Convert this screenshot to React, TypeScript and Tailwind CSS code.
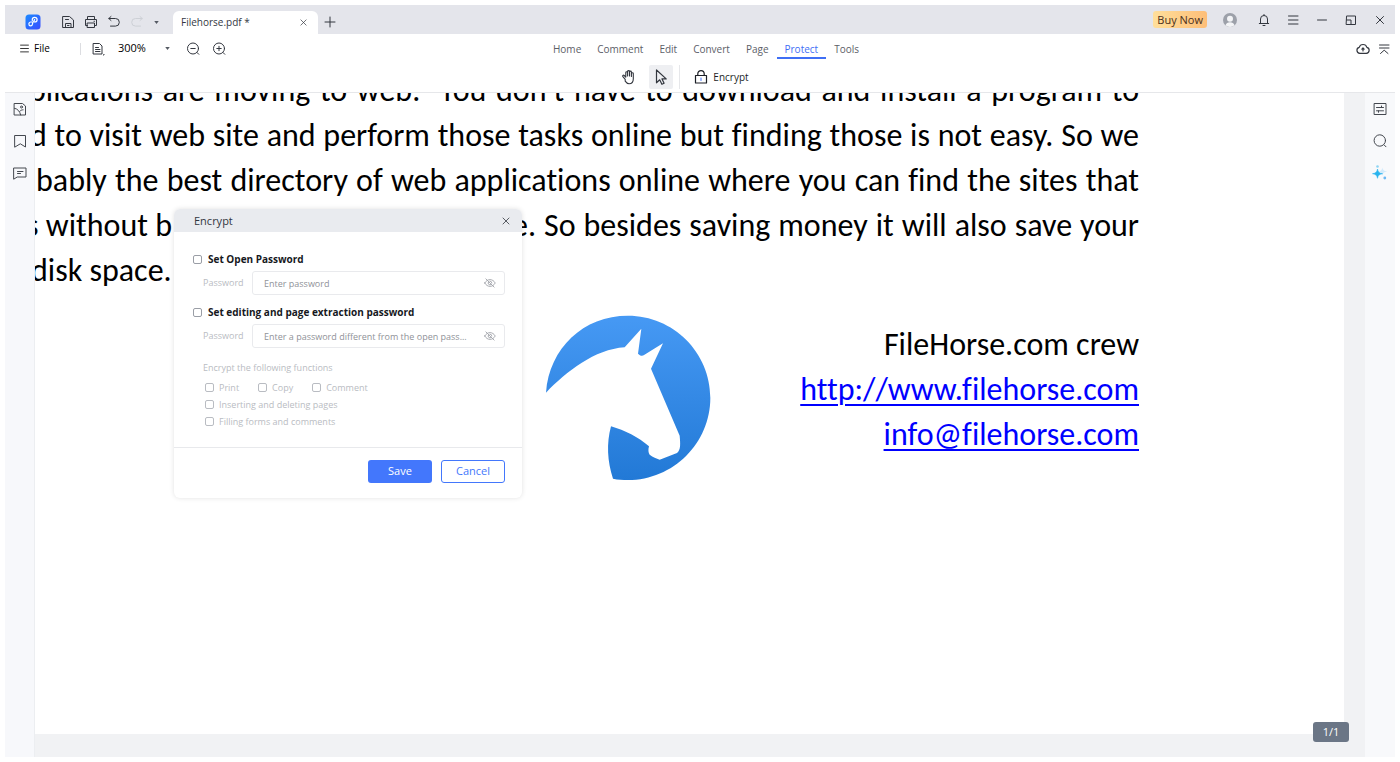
import React from "react";

const menuItems = ["Home", "Comment", "Edit", "Convert", "Page", "Protect", "Tools"];

const permissions = [
  ["Print", "Copy", "Comment"],
  ["Inserting and deleting pages"],
  ["Filling forms and comments"],
];

type IconProps = {
  size?: string;
  className?: string;
  children: React.ReactNode;
};

// All line icons share a 16 unit grid
const Icon: React.FC<IconProps> = ({ size = "w-4 h-4", className = "", children }) => (
  <svg
    viewBox="0 0 16 16"
    className={`${size} shrink-0 ${className}`}
    fill="none"
    stroke="currentColor"
    strokeWidth={1}
    strokeLinecap="round"
    strokeLinejoin="round"
    aria-hidden="true"
  >
    {children}
  </svg>
);

const Caret = () => (
  <svg viewBox="0 0 6 4" className="w-[5px] h-[3px] text-[#555a63]" aria-hidden="true">
    <path d="M0 0h6L3 4z" fill="currentColor" />
  </svg>
);

const CloseIcon = ({ size }: { size: string }) => (
  <Icon size={size}>
    <path d="M2 2l12 12M14 2L2 14" strokeWidth={1.6} />
  </Icon>
);

const AppLogo = () => (
  <svg viewBox="0 0 16 16" className="w-4 h-4 shrink-0" aria-hidden="true">
    <defs>
      <linearGradient id="appLogo" x1="0" y1="0" x2="1" y2="1">
        <stop offset="0" stopColor="#1b8bff" />
        <stop offset="1" stopColor="#3a4bff" />
      </linearGradient>
    </defs>
    <rect x="0.5" y="0.5" width="15" height="15" rx="3.5" fill="url(#appLogo)" />
    <path
      d="M7.300 6.500V5.600c0-1.400 1-2.200 2.300-2.200 1.500 0 2.500.9 2.500 2.300S11.100 8 9.600 8H5.900c-1.200 0-2 .8-2 2s.7 1.900 1.700 1.900 1.700-.7 1.800-1.700l.3-1.200M9.600 5.500L8.500 8"
      fill="none"
      stroke="#fff"
      strokeWidth="1.200"
      strokeLinecap="round"
    />
  </svg>
);

const TitleBar = () => (
  <header className="flex h-[29px] shrink-0 items-center bg-[#e4e5eb] pl-5 pr-[7px] text-[#33373f]">
    <div className="pt-[5px]">
      <AppLogo />
    </div>
    <div className="ml-[19px] flex items-center gap-[7px] pt-[5px]">
      <button aria-label="Save file">
        <Icon>
          <path d="M3 2.500h6.500L13.500 6v7.500H3zM5.500 13.500V9.500h5.500v4M5.500 5.500h3M7.500 11.500h1.500" />
        </Icon>
      </button>
      <button aria-label="Print">
        <Icon>
          <path d="M4.500 5.500v-3h7v3M4.500 11.500h-2v-6h11v6h-2M4.500 9h7v4.500h-7zM11 7.300h.5" />
        </Icon>
      </button>
      <button aria-label="Undo">
        <Icon>
          <path d="M5 2.500L2.800 4.500 5 6.500M2.800 4.500h6.700a3.800 3.800 0 0 1 0 7.600H4.500" />
        </Icon>
      </button>
      <button aria-label="Redo" className="text-[#cdd0d6]">
        <Icon>
          <path d="M11 2.500l2.200 2L11 6.500M13.200 4.500H6.500a3.800 3.800 0 0 0 0 7.600h5" />
        </Icon>
      </button>
      <button aria-label="More actions" className="ml-[2px]">
        <Caret />
      </button>
    </div>
    <div className="ml-[14px] flex w-[145px] items-center justify-between self-end rounded-t-md bg-white pl-2 pr-[11px] h-[23px]">
      <span className="text-[10px]">Filehorse.pdf *</span>
      <button aria-label="Close tab">
        <CloseIcon size="w-[7px] h-[7px]" />
      </button>
    </div>
    <button aria-label="New tab" className="ml-1 pt-1">
      <Icon>
        <path d="M8 3v10M3 8h10" />
      </Icon>
    </button>
    <div className="ml-auto flex items-center gap-[14px]">
      <button className="h-[17px] rounded-[3px] bg-linear-to-r from-[#ffdf9b] to-[#fdbe78] px-1 text-[11px] leading-[17px] text-[#4a2f1b]">
        Buy Now
      </button>
      <button aria-label="Account" className="ml-[2px] mr-[5px]">
        <svg viewBox="0 0 14 14" className="w-[14px] h-[14px]" aria-hidden="true">
          <circle cx="7" cy="7" r="7" fill="#9ca0a9" />
          <circle cx="7" cy="5.800" r="3" fill="#f3f4f6" />
          <path d="M2.500 12.300c.6-2 2.300-3 4.500-3s3.900 1 4.500 3A7 7 0 0 1 7 14a7 7 0 0 1-4.500-1.700z" fill="#f3f4f6" />
        </svg>
      </button>
      <div className="flex items-center gap-[13px]">
        <button aria-label="Notifications">
          <Icon>
            <path d="M4.500 11.500V7a3.500 3.500 0 0 1 7 0v4.500M3.300 11.500h9.400M8 2.500v1M7 13.500h2" />
          </Icon>
        </button>
        <button aria-label="Main menu">
          <Icon>
            <path d="M3.500 4h9.500M3.500 8h9.500M3.500 12h9.500" />
          </Icon>
        </button>
        <button aria-label="Minimize">
          <Icon>
            <path d="M3.500 8h9" />
          </Icon>
        </button>
        <button aria-label="Restore">
          <Icon>
            <path d="M3.500 4.500v-.5h9v8.500h-9zM3.500 8h4.500v4.500" />
          </Icon>
        </button>
        <button aria-label="Close window">
          <Icon>
            <path d="M4.500 4.500l7 7M11.500 4.500l-7 7" />
          </Icon>
        </button>
      </div>
    </div>
  </header>
);

const Toolbar = () => (
  <div className="shrink-0 border-b border-[#e6e7ea] bg-white text-[#33373f]">
    <div className="grid h-[29px] grid-cols-[1fr_auto_1fr] items-center pl-[15px] pr-[3px]">
      <div className="flex items-center text-black">
        <button className="flex w-[60px] items-center gap-[5px] text-[10px]">
          <Icon size="w-[9px] h-[9px]">
            <path d="M1 2h14M1 8h14M1 14h14" strokeWidth={1.4} />
          </Icon>
          File
        </button>
        <span className="h-3 w-px bg-[#dcdde1]" />
        <button aria-label="Page view" className="ml-[9px] text-[#33373f]">
          <Icon>
            <path d="M3.500 2.500h6L12 5v8H3.500zM5.500 6.500h3M5.500 8.500h4.500M5.500 10.500h4.500M14 13.500v.5h-.5" />
          </Icon>
        </button>
        <button className="ml-3 flex w-[52px] items-center justify-between text-[11px]">
          300%
          <Caret />
        </button>
        <button aria-label="Zoom out" className="ml-[15px] text-[#33373f]">
          <Icon>
            <circle cx="8" cy="7.500" r="5.500" />
            <path d="M5.800 7.500h4.400M12 11.500l1.800 1.800" />
          </Icon>
        </button>
        <button aria-label="Zoom in" className="ml-[10px] text-[#33373f]">
          <Icon>
            <circle cx="8" cy="7.500" r="5.500" />
            <path d="M5.800 7.500h4.400M8 5.300v4.400M12 11.500l1.800 1.800" />
          </Icon>
        </button>
      </div>
      <nav className="flex h-full items-start">
        {menuItems.map((item) => (
          <button
            key={item}
            className={`h-[25px] border-b-2 px-[8px] pt-[6px] text-[10px] leading-4 ${
              item === "Protect" ? "border-[#3f6ff5] text-[#3f6ff5]" : "border-transparent text-[#5c6068]"
            }`}
          >
            {item}
          </button>
        ))}
      </nav>
      <div className="flex items-center justify-end gap-[5px]">
        <button aria-label="Upload to cloud">
          <Icon>
            <path
              d="M4.800 12.300a3 3 0 0 1-.6-5.900 4 4 0 0 1 7.700 0 3 3 0 0 1-.6 5.900zM8 10V7.200M6.900 8.200L8 7l1.100 1.200"
              strokeWidth={1.200}
            />
          </Icon>
        </button>
        <button aria-label="Collapse toolbar">
          <Icon>
            <path d="M3.500 4h9.500M3.500 7h9.500M4.500 12.500L8.200 9.200l3.800 3.300" />
          </Icon>
        </button>
      </div>
    </div>
    <div className="flex h-[29px] items-center justify-center pb-[2px] pr-[34px]">
      <button aria-label="Hand tool" className="flex h-6 w-6 items-center justify-center">
        <Icon>
          <path
            d="M4.200 10.300L1.900 7.700c-.8-1 .4-2 1.300-1.200l1.600 1.600V3.600c0-1.200 1.800-1.200 1.800 0V7 2.500c0-1.200 1.900-1.200 1.900 0V7 3c0-1.200 1.900-1.200 1.900 0V7.500 4.600c0-1.200 1.900-1.200 1.900 0V9.700c0 3.200-1.700 5-4.200 5-1.900 0-2.700-.8-3.900-2.600z"
            strokeWidth={1.100}
          />
        </Icon>
      </button>
      <button aria-label="Select tool" className="ml-2 flex h-6 w-6 items-center justify-center rounded-[2px] bg-[#eeeff2]">
        <Icon>
          <path d="M3.500 1v12.800l3.200-3 2.200 4.500 2.200-1.100-2.100-4.300h4.200z" strokeWidth={1.200} />
        </Icon>
      </button>
      <span className="ml-[6px] h-6 w-px bg-[#e6e7ea]" />
      <button className="ml-[13px] flex items-center gap-1 text-[10px] leading-3 text-[#1c1f26]">
        <Icon>
          <path d="M2.500 6.500h11v7.500h-11zM4.800 6.500V4.800a3.200 3.200 0 0 1 6.400 0v1.700" strokeWidth={1.200} />
          <path d="M8 9v2.500" stroke="#3f6ff5" />
        </Icon>
        Encrypt
      </button>
    </div>
  </div>
);

const LeftRail = () => (
  <aside className="flex w-[30px] shrink-0 flex-col items-center gap-4 border-r border-[#eceef1] bg-[#f7f8fb] pt-2 text-[#44484f]">
    <button aria-label="Thumbnails">
      <Icon>
        <path d="M2.500 2.500h8L13.500 5v9h-11zM2.500 7.300c3 .4 5.200 2.800 6.200 6.700M7.800 10.300c.8-1 1.900-1.500 3.300-1.500" />
        <circle cx="9.500" cy="6" r="1" />
      </Icon>
    </button>
    <button aria-label="Bookmarks">
      <Icon>
        <path d="M3 2.500h10.500v11.500L8.300 10.800 3 14z" />
      </Icon>
    </button>
    <button aria-label="Comments">
      <Icon>
        <path d="M2 3h12v9H5.200L2 14zM5.500 6.500h5.500M5.500 8.500h3" />
      </Icon>
    </button>
  </aside>
);

const RightRail = () => (
  <aside className="flex w-[30px] shrink-0 flex-col items-center gap-4 bg-[#f8f9fb] pt-2 text-[#44484f]">
    <button aria-label="Properties">
      <Icon>
        <path d="M2.500 2.500h11.500v11H2.500zM4.500 6.500h7M9.500 5v1.500M4.500 9.800h7M6.500 9.800v1.500" />
      </Icon>
    </button>
    <button aria-label="Search">
      <Icon>
        <circle cx="7.800" cy="7.500" r="5.700" />
        <path d="M12.200 12l1.800 1.800" />
      </Icon>
    </button>
    <button aria-label="AI assistant">
      <svg viewBox="0 0 16 16" className="w-4 h-4" aria-hidden="true">
        <path d="M10.500 2.500c.4 2.700 1.300 3.500 4.800 4-3.500.5-4.300 1.500-4.800 4.500-.5-3-1.500-4-4-4.500 2.500-.5 3.500-1.500 4-4z" fill="#d3ebfb" />
        <path d="M5.500 4c.6 3 1.500 4.200 5 4.700-3.500.5-4.400 1.600-5 4.600-.6-3-1.500-4.100-5-4.600 3.500-.5 4.400-1.700 5-4.700z" fill="#29b4ee" stroke="#29b4ee" strokeWidth="0.600" />
        <circle cx="5.500" cy="1.500" r="1.300" fill="#8ed4f3" />
        <circle cx="12.800" cy="13" r="1.400" fill="#6cb9f4" />
      </svg>
    </button>
  </aside>
);

const HorseLogo = () => (
  <svg viewBox="0 0 600 600" className="h-[200px] w-[200px] shrink-0" role="img" aria-label="FileHorse">
    <defs>
      <linearGradient id="horse" x1="0" y1="0" x2="0" y2="1">
        <stop offset="0" stopColor="#4699f4" />
        <stop offset="1" stopColor="#2279d6" />
      </linearGradient>
    </defs>
    <path
      d="M48 278C58 144 160 47 294 47c136 0 247 110 247 246S430 540 294 540c-16 0-30-1-45-4-17-52-20-106-6-157 42 12 82 32 114 60-3 10-2 20 2 25 10 8 20 11 30 15l52-20c12-10 10-28 8-52L363 206l36-76-58 36c-6 3-12 0-17-5l10-75-50 56c-90 6-174 72-236 136z"
      fill="url(#horse)"
    />
  </svg>
);

const lines = [
  { width: "w-[1110px]", text: "plications are moving to web.\u00a0 You don't have to download and install a program to" },
  { width: "w-[1109px]", text: "d to visit web site and perform those tasks online but finding those is not easy. So we" },
  { width: "w-[1103px]", text: "bably the best directory of web applications online where you can find the sites that" },
];

const DocumentPage = () => (
  <div className="mr-[21px] flex-1 overflow-hidden bg-white text-[32px] leading-[45px] text-black [font-family:Carlito,Lato,sans-serif] [font-variant-ligatures:none]">
    <div className="-ml-10 -mt-[25px] flex w-[1144px] flex-col items-end">
      {lines.map((line) => (
        <p key={line.text} className={`${line.width} whitespace-nowrap [text-align-last:justify]`}>
          {line.text}
        </p>
      ))}
      <p className="flex w-[1113px] justify-between whitespace-nowrap">
        <span>s without b</span>
        <span className="w-[627px] [text-align-last:justify]">e. So besides saving money it will also save your</span>
      </p>
      <p className="w-[1108px]">disk space.</p>
      <div className="flex w-full items-start justify-between pl-[535px] pt-[7px]">
        <HorseLogo />
        <div className="flex flex-col items-end pt-[22px]">
          <p>FileHorse.com crew</p>
          <a href="http://www.filehorse.com" className="text-[#0000ff] underline decoration-2 underline-offset-4">
            http://www.filehorse.com
          </a>
          <a href="mailto:info@filehorse.com" className="text-[#0000ff] underline decoration-2 underline-offset-4">
            info@filehorse.com
          </a>
        </div>
      </div>
    </div>
  </div>
);

const Box = ({ id }: { id: string }) => (
  <input
    id={id}
    type="checkbox"
    className="h-[9px] w-[9px] shrink-0 appearance-none rounded-[2px] border border-current bg-white"
  />
);

type PasswordProps = { id: string; title: string; placeholder: string };

const PasswordSection: React.FC<PasswordProps> = ({ id, title, placeholder }) => (
  <div>
    <div className="flex h-4 items-center gap-[6px] text-[#9a9ea6]">
      <Box id={`${id}-on`} />
      <label htmlFor={`${id}-on`} className="text-[10px] font-bold text-[#16181d]">
        {title}
      </label>
    </div>
    <div className="mt-1 flex items-center pl-[10px]">
      <label htmlFor={id} className="w-[49px] text-[9px] text-[#b9bcc2]">
        Password
      </label>
      <div className="flex h-6 flex-1 items-center rounded-[3px] border border-[#e9eaed] pl-[11px] pr-2">
        <input
          id={id}
          type="password"
          placeholder={placeholder}
          className="min-w-0 flex-1 bg-transparent pt-px text-[9px] outline-none placeholder:text-[#8f9298]"
        />
        <button aria-label="Show password" className="ml-3 text-[#a0a3a9]">
          <Icon size="w-3 h-3">
            <path
              d="M1 8c1.800-3 4.200-4.500 7-4.500S13.200 5 15 8c-1.800 3-4.200 4.500-7 4.500S2.800 11 1 8zM2.500 2.500l11 11"
              strokeWidth={1.200}
            />
            <path d="M6 6.500a2.500 2.500 0 0 0 3.500 3.500M8 5.500A2.500 2.500 0 0 1 10.500 8" strokeWidth={1.200} />
          </Icon>
        </button>
      </div>
    </div>
  </div>
);

const EncryptDialog = () => (
  <div
    role="dialog"
    aria-label="Encrypt"
    className="absolute left-[139px] top-[116px] w-[348px] overflow-hidden rounded-md bg-white shadow-[0_0_5px_rgba(0,0,0,0.12)]"
  >
    <div className="flex h-[23px] items-center justify-between bg-[#e9ebef] pl-5 pr-3 text-[#33373f]">
      <h2 className="pt-px text-[11px]">Encrypt</h2>
      <button aria-label="Close dialog">
        <CloseIcon size="w-2 h-2" />
      </button>
    </div>
    <div className="h-[216px] border-b border-[#e8e9ec] pl-[19px] pr-[17px] pt-[19px]">
      <div className="flex flex-col gap-[9px]">
        <PasswordSection id="open-password" title="Set Open Password" placeholder="Enter password" />
        <PasswordSection
          id="edit-password"
          title="Set editing and page extraction password"
          placeholder="Enter a password different from the open pass..."
        />
      </div>
      <fieldset className="mt-3 pl-[10px] text-[9px] text-[#b9bcc2]">
        <legend className="h-4 leading-4">Encrypt the following functions</legend>
        <div className="mt-[3px] pl-[2px]">
          {permissions.map((row) => (
            <div key={row[0]} className="flex h-[17px] items-center gap-[19px]">
              {row.map((name) => (
                <div key={name} className="flex items-center gap-[5px]">
                  <Box id={name} />
                  <label htmlFor={name}>{name}</label>
                </div>
              ))}
            </div>
          ))}
        </div>
      </fieldset>
    </div>
    <div className="flex h-[50px] items-center justify-end gap-[9px] pb-[3px] pr-[17px] text-[11px]">
      <button className="h-[23px] w-16 rounded-[3px] bg-[#4377fc] text-white">Save</button>
      <button className="h-[23px] w-16 rounded-[3px] border border-[#4377fc] text-[#4377fc]">Cancel</button>
    </div>
  </div>
);

export default function App() {
  return (
    <div className="h-screen bg-white p-[5px] [font-family:'Open_Sans','Noto_Sans',sans-serif]">
      <div className="flex h-full flex-col overflow-hidden">
        <TitleBar />
        <Toolbar />
        <div className="flex min-h-0 flex-1">
          <LeftRail />
          <main className="relative flex min-w-0 flex-1 flex-col bg-[#f1f2f4] pb-[23px]">
            <DocumentPage />
            <EncryptDialog />
            <div className="absolute bottom-[15px] right-4 flex h-5 w-9 items-center justify-center rounded-[3px] bg-[#6b7686] text-[11px] text-white">
              1/1
            </div>
          </main>
          <RightRail />
        </div>
      </div>
    </div>
  );
}
